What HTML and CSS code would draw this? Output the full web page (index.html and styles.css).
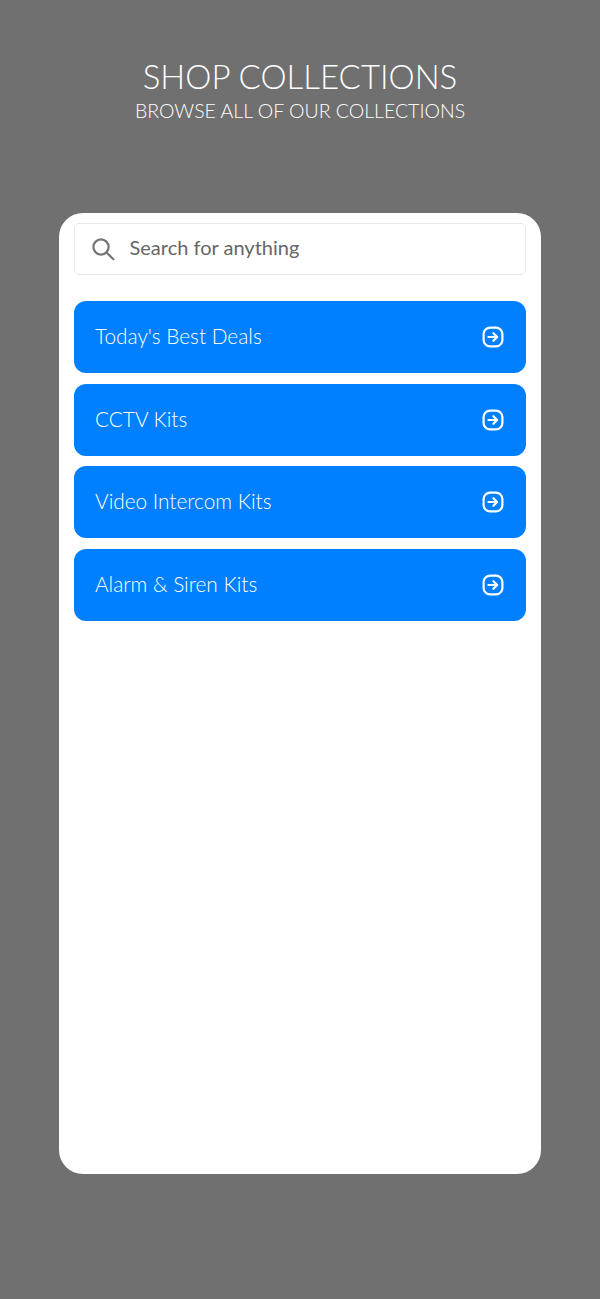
FILE: index.html
```html
<!DOCTYPE html>
<html lang="en">
<head>
    <meta charset="UTF-8">
    <meta name="viewport" content="width=device-width, initial-scale=1.0">
    <title>Shop Collections</title>
    <link rel="stylesheet" href="styles.css">
</head>
<body>
    <header class="header">
        <h1>SHOP COLLECTIONS</h1>
        <p>BROWSE ALL OF OUR COLLECTIONS</p>
    </header>
    <main class="card">
        <div class="search">
            <svg class="search-icon" width="24" height="24" viewBox="0 0 24 24" fill="none" stroke="#757575" stroke-width="2.2" stroke-linecap="round">
                <circle cx="10" cy="10" r="7.6"/>
                <path d="M15.8 15.8 L22.4 22.2"/>
            </svg>
            <span>Search for anything</span>
        </div>
        <ul class="list">
            <li class="item"><span>Today's Best Deals</span><svg class="arrow" width="24" height="24" viewBox="0 0 24 24" fill="none" stroke="#fff" stroke-width="2.2" stroke-linecap="round" stroke-linejoin="round"><rect x="2.6" y="2.6" width="18.8" height="18.8" rx="6.5"/><path d="M7.4 12 H16 M12.4 8.2 L16.2 12 L12.4 15.8"/></svg></li>
            <li class="item"><span>CCTV Kits</span><svg class="arrow" width="24" height="24" viewBox="0 0 24 24" fill="none" stroke="#fff" stroke-width="2.2" stroke-linecap="round" stroke-linejoin="round"><rect x="2.6" y="2.6" width="18.8" height="18.8" rx="6.5"/><path d="M7.4 12 H16 M12.4 8.2 L16.2 12 L12.4 15.8"/></svg></li>
            <li class="item"><span>Video Intercom Kits</span><svg class="arrow" width="24" height="24" viewBox="0 0 24 24" fill="none" stroke="#fff" stroke-width="2.2" stroke-linecap="round" stroke-linejoin="round"><rect x="2.6" y="2.6" width="18.8" height="18.8" rx="6.5"/><path d="M7.4 12 H16 M12.4 8.2 L16.2 12 L12.4 15.8"/></svg></li>
            <li class="item"><span>Alarm &amp; Siren Kits</span><svg class="arrow" width="24" height="24" viewBox="0 0 24 24" fill="none" stroke="#fff" stroke-width="2.2" stroke-linecap="round" stroke-linejoin="round"><rect x="2.6" y="2.6" width="18.8" height="18.8" rx="6.5"/><path d="M7.4 12 H16 M12.4 8.2 L16.2 12 L12.4 15.8"/></svg></li>
        </ul>
    </main>
</body>
</html>
```
FILE: styles.css
```css
body {
    font-family: 'Lato', sans-serif;
    margin: 0;
    padding: 0;
    height: 1299px;
    overflow: hidden;
    background: #707070;
}
.header {
    height: 213px;
    padding-top: 55px;
    box-sizing: border-box;
    text-align: center;
    color: #fff;
}
.header h1 {
    margin: 0;
    font-size: 33px;
    line-height: 42px;
    font-weight: 300;
}
.header p {
    margin: 1px 0 0;
    font-size: 19.5px;
    line-height: 26px;
    font-weight: 300;
}
.card {
    width: 482px;
    height: 961px;
    margin: 0 auto;
    padding: 10px 15px;
    box-sizing: border-box;
    background: #fff;
    border-radius: 24px;
}
.search {
    display: flex;
    align-items: center;
    height: 51.5px;
    box-sizing: border-box;
    padding-left: 15.5px;
    border: 1.5px solid #e8e8e8;
    border-radius: 5px;
    color: #666;
    font-size: 20px;
}
.search-icon {
    margin-right: 15px;
}
.search span {
    margin-bottom: 3px;
}
.list {
    list-style: none;
    margin: 26.5px 0 0;
    padding: 0;
    display: flex;
    flex-direction: column;
    gap: 10.4px;
}
.item {
    display: flex;
    align-items: center;
    justify-content: space-between;
    height: 72.2px;
    padding: 0 21px 0 21px;
    background: #0080ff;
    border-radius: 12px;
    color: #fff;
    font-size: 20.8px;
    font-weight: 300;
}
.item span {
    margin-bottom: 3px;
}
```
